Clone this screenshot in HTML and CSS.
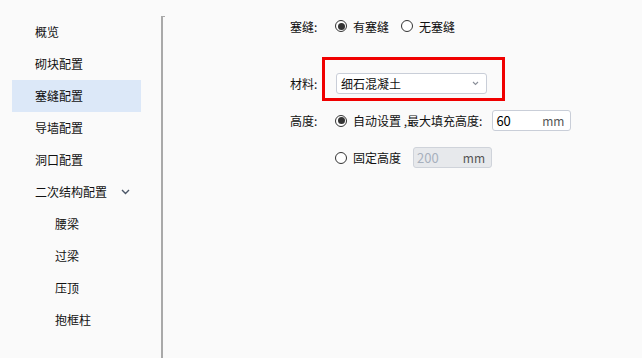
FILE: index.html
```html
<!DOCTYPE html>
<html>
<head>
<meta charset="utf-8">
<link rel="stylesheet" href="styles.css">
</head>
<body>
<div class="app">
  <nav class="sidebar">
    <div class="nav-item">概览</div>
    <div class="nav-item">砌块配置</div>
    <div class="nav-item active">塞缝配置</div>
    <div class="nav-item">导墙配置</div>
    <div class="nav-item">洞口配置</div>
    <div class="nav-item group">二次结构配置
      <svg class="chev" width="9" height="6" viewBox="0 0 9 6"><path d="M1 1 L4.5 4.5 L8 1" fill="none" stroke="#4a5566" stroke-width="1.4"/></svg>
    </div>
    <div class="nav-item sub">腰梁</div>
    <div class="nav-item sub">过梁</div>
    <div class="nav-item sub">压顶</div>
    <div class="nav-item sub">抱框柱</div>
  </nav>
  <main class="main">
    <div class="form">
      <div class="row r1">
        <span class="label">塞缝:</span>
        <label class="radio"><span class="dot checked"></span>有塞缝</label>
        <label class="radio"><span class="dot"></span>无塞缝</label>
      </div>
      <div class="row r2">
        <span class="label">材料:</span>
        <div class="select-wrap">
          <div class="select"><span>细石混凝土</span>
            <svg width="7" height="5" viewBox="0 0 7 5"><path d="M1 1 L3.5 3.5 L6 1" fill="none" stroke="#8a8f99" stroke-width="1.1"/></svg>
          </div>
        </div>
      </div>
      <div class="row r3">
        <span class="label">高度:</span>
        <label class="radio tight"><span class="dot checked"></span>自动设置 ,最大填充高度:</label>
        <div class="input"><span class="val">60</span><span class="unit">mm</span></div>
      </div>
      <div class="row r4">
        <span class="label"></span>
        <label class="radio"><span class="dot"></span>固定高度</label>
        <div class="input disabled"><span class="val">200</span><span class="unit">mm</span></div>
      </div>
    </div>
  </main>
</div>
</body>
</html>
```
FILE: styles.css
```css
html, body {
  margin: 0;
  padding: 0;
  background: #fafafa;
  font-family: "Microsoft YaHei", "Noto Sans CJK SC", "Noto Sans", sans-serif;
  font-size: 12px;
  color: #111;
}
.app {
  display: flex;
  width: 642px;
  height: 358px;
}
.sidebar {
  width: 161px;
  padding-top: 16px;
  box-sizing: border-box;
}
.nav-item {
  margin-left: 12px;
  width: 129px;
  height: 32px;
  line-height: 32px;
  padding-left: 23px;
  box-sizing: border-box;
  position: relative;
}
.nav-item.active {
  background: #dce8f8;
}
.nav-item.sub {
  padding-left: 43px;
}
.chev {
  position: absolute;
  left: 109px;
  top: 13px;
}
.main {
  flex: 1;
  margin-top: 16px;
  border-left: 2px solid #a9a9a9;
  position: relative;
}
.main::before {
  content: "";
  position: absolute;
  left: 0;
  top: 0;
  width: 2px;
  height: 1px;
  background: #a9a9a9;
}
.form {
  padding-left: 127px;
}
.row {
  display: flex;
  align-items: center;
}
.label {
  width: 45px;
  flex: none;
}
.r1 { height: 20px; }
.r2 { margin-top: 37px; height: 21px; }
.r3 { margin-top: 16px; height: 21px; }
.r4 { margin-top: 16px; height: 21px; }
.radio {
  display: flex;
  align-items: center;
  margin-right: 12px;
}
.radio.tight {
  margin-right: 10px;
}
.dot {
  width: 10px;
  height: 10px;
  border: 1.5px solid #333;
  border-radius: 50%;
  margin-right: 6px;
  position: relative;
  background: #fff;
}
.dot.checked::after {
  content: "";
  position: absolute;
  left: 1.5px;
  top: 1.5px;
  width: 7px;
  height: 7px;
  border-radius: 50%;
  background: #333;
}
.select-wrap {
  position: relative;
  margin-left: 1px;
}
.select-wrap::after {
  content: "";
  position: absolute;
  left: -14px;
  right: -18px;
  top: -16px;
  bottom: -7px;
  border: 3px solid #f00000;
}
.select {
  width: 151px;
  height: 21px;
  box-sizing: border-box;
  border: 1px solid #c9ced8;
  border-radius: 3px;
  background: #fff;
  display: flex;
  align-items: center;
  justify-content: space-between;
  padding: 0 7px 0 4px;
}
.input {
  width: 79px;
  height: 21px;
  box-sizing: border-box;
  border: 1px solid #c9ced8;
  border-radius: 3px;
  background: #fff;
  display: flex;
  align-items: center;
  justify-content: space-between;
  padding: 0 6px 0 3px;
}
.input .val {
  font-size: 13px;
  color: #000;
}
.input .unit {
  color: #555;
  font-size: 12px;
}
.input.disabled {
  background: #e7e9ec;
  border-color: #cfd3da;
}
.input.disabled .val {
  color: #a7b0bd;
}
```
